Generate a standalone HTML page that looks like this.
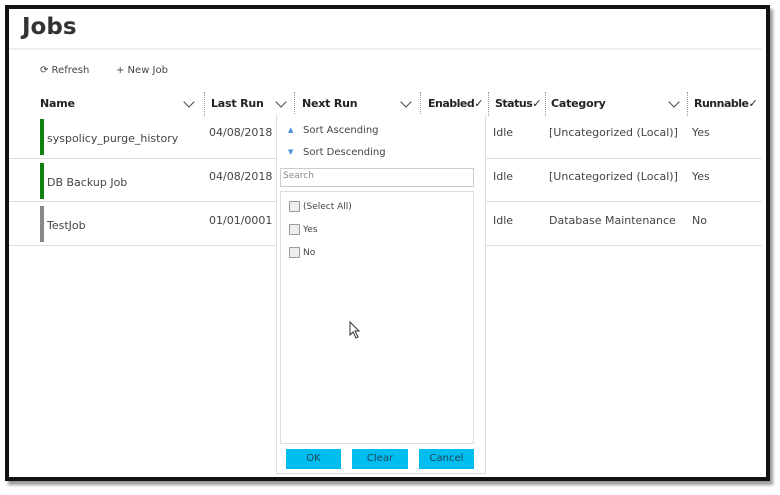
<!DOCTYPE html>
<html><head><style>
body{margin:0;width:780px;height:495px;background:#fff;position:relative;overflow:hidden;font-family:"DejaVu Sans","Liberation Sans",sans-serif;color:#333}
.a{position:absolute;white-space:nowrap}
.frame{position:absolute;left:5px;top:5px;width:757px;height:468px;border:4px solid #111;box-shadow:3px 4px 3px #999;background:#fff}
.h{font-weight:bold;font-size:11px;color:#222;top:97px;letter-spacing:-0.2px}
.c{font-size:11px;color:#444}
.sep{position:absolute;top:92px;height:24px;border-left:1px dotted #999}
.chev{position:absolute;top:98px;width:7px;height:7px;border-right:1.3px solid #444;border-bottom:1.3px solid #444;transform:rotate(45deg)}
.row{position:absolute;left:9px;width:753px;height:1px;background:#ddd}
.bar{position:absolute;left:40px;width:4px;height:36px}
.btn{position:absolute;top:449px;height:20px;background:#00bdf0;font-size:10px;color:#245;text-align:center;line-height:20px}
.cb{position:absolute;left:289px;width:9px;height:9px;border:1px solid #999;background:#eee;border-radius:1px}
</style></head><body>
<div class="frame"></div>
<div class="a" style="left:22px;top:14px;font-size:23px;font-weight:bold;color:#333">Jobs</div>
<div style="position:absolute;left:9px;top:48px;width:753px;height:2px;background:#eee"></div>
<div class="a" style="left:40px;top:65px;font-size:10px;color:#444">⟳ Refresh</div>
<div class="a" style="left:116px;top:65px;font-size:10px;color:#444">+ New Job</div>
<div class="a h" style="left:40px">Name</div><div class="chev" style="left:185px"></div><div class="sep" style="left:204px"></div>
<div class="a h" style="left:211px">Last Run</div><div class="chev" style="left:277px"></div><div class="sep" style="left:294px"></div>
<div class="a h" style="left:302px">Next Run</div><div class="chev" style="left:402px"></div><div class="sep" style="left:420px"></div>
<div class="a h" style="left:428px;letter-spacing:-0.5px">Enabled✓</div><div class="sep" style="left:488px"></div>
<div class="a h" style="left:495px;letter-spacing:-0.5px">Status✓</div><div class="sep" style="left:545px"></div>
<div class="a h" style="left:551px">Category</div><div class="chev" style="left:670px"></div><div class="sep" style="left:687px"></div>
<div class="a h" style="left:694px;letter-spacing:-0.5px">Runnable✓</div>
<div class="bar" style="top:119px;background:#108010"></div>
<div class="bar" style="top:163px;background:#108010"></div>
<div class="bar" style="top:206px;background:#888"></div>
<div class="row" style="top:158px"></div><div class="row" style="top:201px"></div><div class="row" style="top:245px"></div>
<div class="a c" style="left:47px;top:132px">syspolicy_purge_history</div>
<div class="a c" style="left:47px;top:176px">DB Backup Job</div>
<div class="a c" style="left:47px;top:219px">TestJob</div>
<div class="a c" style="left:209px;top:126px">04/08/2018 0</div>
<div class="a c" style="left:209px;top:170px">04/08/2018 1</div>
<div class="a c" style="left:209px;top:214px">01/01/0001 0</div>
<div class="a c" style="left:493px;top:126px">Idle</div><div class="a c" style="left:549px;top:126px">[Uncategorized (Local)]</div><div class="a c" style="left:692px;top:126px">Yes</div>
<div class="a c" style="left:493px;top:170px">Idle</div><div class="a c" style="left:549px;top:170px">[Uncategorized (Local)]</div><div class="a c" style="left:692px;top:170px">Yes</div>
<div class="a c" style="left:493px;top:214px">Idle</div><div class="a c" style="left:549px;top:214px">Database Maintenance</div><div class="a c" style="left:692px;top:214px">No</div>
<div style="position:absolute;left:276px;top:115px;width:208px;height:358px;background:#fff;border:1px solid #ddd;border-top:none"></div>
<div class="a" style="left:288px;top:126px;font-size:7px;color:#4a90d9">▲</div>
<div class="a c" style="left:303px;top:125px;font-size:10px">Sort Ascending</div>
<div class="a" style="left:288px;top:148px;font-size:7px;color:#4a90d9">▼</div>
<div class="a c" style="left:303px;top:147px;font-size:10px">Sort Descending</div>
<div style="position:absolute;left:280px;top:168px;width:192px;height:17px;border:1px solid #ccc"></div>
<div class="a" style="left:283px;top:171px;font-size:9px;color:#888">Search</div>
<div style="position:absolute;left:280px;top:191px;width:192px;height:251px;border:1px solid #ddd"></div>
<div class="cb" style="top:201px"></div><div class="a c" style="left:303px;top:202px;font-size:9px">(Select All)</div>
<div class="cb" style="top:224px"></div><div class="a c" style="left:303px;top:225px;font-size:9px">Yes</div>
<div class="cb" style="top:247px"></div><div class="a c" style="left:303px;top:248px;font-size:9px">No</div>
<svg class="a" style="left:349px;top:321px" width="12" height="18"><path d="M1 1 L1 14 L4 11 L7 17 L9 16 L6 10 L10 10 Z" fill="#fff" stroke="#333" stroke-width="1"/></svg>
<div class="btn" style="left:286px;width:55px">OK</div>
<div class="btn" style="left:352px;width:56px">Clear</div>
<div class="btn" style="left:419px;width:55px">Cancel</div>
</body></html>
